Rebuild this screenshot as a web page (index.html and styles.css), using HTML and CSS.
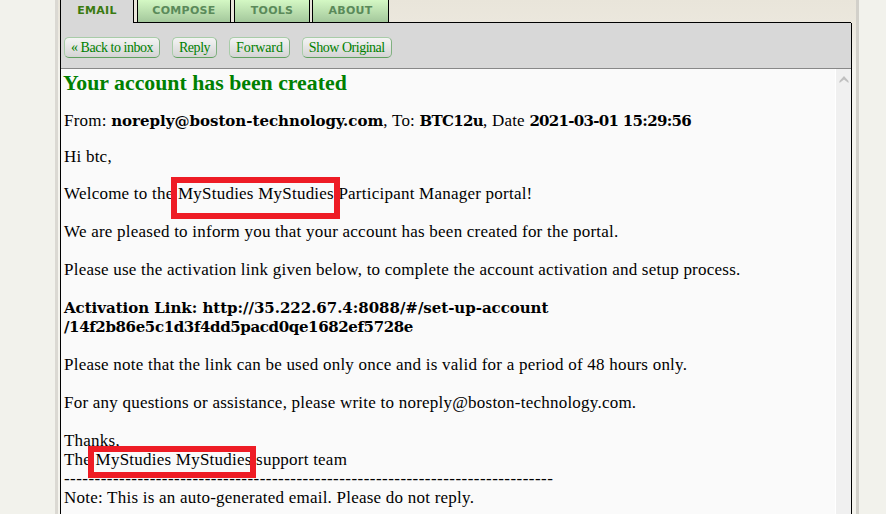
FILE: index.html
```html
<!DOCTYPE html>
<html lang="en">
<head>
<meta charset="utf-8">
<title>Email</title>
<link rel="stylesheet" href="styles.css">
</head>
<body>
<div class="column">
  <nav class="tabs">
    <a class="tab active">EMAIL</a>
    <a class="tab tab-compose">COMPOSE</a>
    <a class="tab tab-tools">TOOLS</a>
    <a class="tab tab-about">ABOUT</a>
  </nav>
  <div class="panel">
    <div class="toolbar">
      <a class="btn">« Back to inbox</a>
      <a class="btn">Reply</a>
      <a class="btn btn-forward">Forward</a>
      <a class="btn">Show Original</a>
    </div>
    <div class="viewer">
      <div class="message">
        <h1 class="subject">Your account has been created</h1>
        <p class="meta">From: <b>noreply@boston-technology.com</b>, To: <b class="num">BTC12u</b>, Date <b class="num">2021-03-01 15:29:56</b></p>
        <p class="greeting">Hi btc,</p>
        <p>Welcome to the MyStudies MyStudies Participant Manager portal!</p>
        <p>We are pleased to inform you that your account has been created for the portal.</p>
        <p>Please use the activation link given below, to complete the account activation and setup process.</p>
        <p><b class="link">Activation Link: http://35.222.67.4:8088/#/set-up-account<br><span class="hash">/14f2b86e5c1d3f4dd5pacd0qe1682ef5728e</span></b></p>
        <p>Please note that the link can be used only once and is valid for a period of 48 hours only.</p>
        <p>For any questions or assistance, please write to noreply@boston-technology.com.</p>
        <p>Thanks,<br>The MyStudies MyStudies support team<br><span class="rule">--------------------------------------------------------------------------------</span><br>Note: This is an auto-generated email. Please do not reply.</p>
      </div>
      <div class="scrollbar"><svg class="arrow" width="10" height="7" viewBox="0 0 10 7"><path d="M5 0 L9.5 5 V7 L5 3.5 L.5 7 V5 Z" fill="#c0c0c0"/></svg></div>
    </div>
  </div>
</div>
<div class="mark mark-top"></div>
<div class="mark mark-bottom"></div>
</body>
</html>
```

FILE: styles.css
```css
* { box-sizing: border-box; }
html, body { margin: 0; height: 100%; overflow: hidden; }
body {
  background: #f2f2ec;
  font-family: "Liberation Serif", serif;
  position: relative;
}
.column {
  width: 804px;
  height: 514px;
  margin-left: 55px;
  padding: 0 4px 0 2px;
  background: linear-gradient(#e9e5da, #ebe7dd 22px, #f5f4ee 70px);
  border-right: 3px solid #d2d0ca;
  border-left: 3px solid #dbd9d3;
  display: flex;
  flex-direction: column;
}
.tabs {
  display: flex;
  height: 23px;
  flex: none;
  border-left: 1px solid #000;
}
.tab {
  font: bold 11px/21px "DejaVu Sans", sans-serif;
  letter-spacing: .3px;
  text-align: center;
  color: #5a8a5a;
  border: 1px solid #000;
  border-top: 0;
  background: linear-gradient(#d4f8c4, #a4c89c);
  height: 23px;
}
.tab.active { width: 73px; background: #d8d8d8; color: #3a7a10; border-bottom: 0; border-left: 0; }
.tab-compose { width: 94px; margin-left: 3px; }
.tab-tools { width: 76px; margin-left: 3px; }
.tab-about { width: 77px; margin-left: 2px; }
.panel {
  flex: 1;
  min-height: 0;
  border: solid #000;
  border-width: 0 1px;
  display: flex;
  flex-direction: column;
}
.toolbar {
  height: 46px;
  flex: none;
  background: #d8d8d8;
  border-bottom: 1px solid #888;
  display: flex;
  gap: 12px;
  align-items: flex-start;
  padding: 14px 0 0 3px;
  position: relative;
}
.toolbar::before {
  content: "";
  position: absolute;
  left: 73px;
  right: 0;
  top: -1px;
  height: 1px;
  background: #000;
}
.btn {
  font-size: 14px;
  letter-spacing: -.47px;
  line-height: 19px;
  height: 21px;
  padding: 0 6px;
  color: #008000;
  border: 1px solid #a8cca8;
  border-bottom-color: #60a060;
  border-right-color: #80b080;
  border-radius: 5px;
  background: linear-gradient(#f4f4f4, #d4d4d4);
}
.btn-forward { letter-spacing: -.1px; }
.viewer { flex: 1; min-height: 0; display: flex; background: #fafafa; }
.message { flex: 1; min-width: 0; padding: 0 3px; font-size: 17px; letter-spacing: .23px; line-height: 19px; color: #000; overflow: hidden; }
.subject { margin: 2px 0 16px -1px; font: bold 21.8px/24px "Liberation Serif", serif; letter-spacing: 0; color: #008000; }
.message p { margin: 0 0 19px; white-space: nowrap; }
.message .meta { margin-bottom: 17px; }
.message .greeting { margin-bottom: 18px; }
.message b { font: bold 15px/16px "DejaVu Serif", serif; letter-spacing: 0; }
.message .num { letter-spacing: -.7px; }
.message .link { letter-spacing: -.03px; }
.message .hash { letter-spacing: -.37px; }
.rule { letter-spacing: .455px; }
.scrollbar { width: 16px; flex: none; background: #f0f0f0; border-left: 1px solid #fff; padding: 7px 0 0 3px; }
.arrow { display: block; }
.mark { position: absolute; border: 6px solid #ee1c25; pointer-events: none; }
.mark-top { left: 171px; top: 177px; width: 169px; height: 42px; }
.mark-bottom { left: 88px; top: 446px; width: 168px; height: 32px; }
```
